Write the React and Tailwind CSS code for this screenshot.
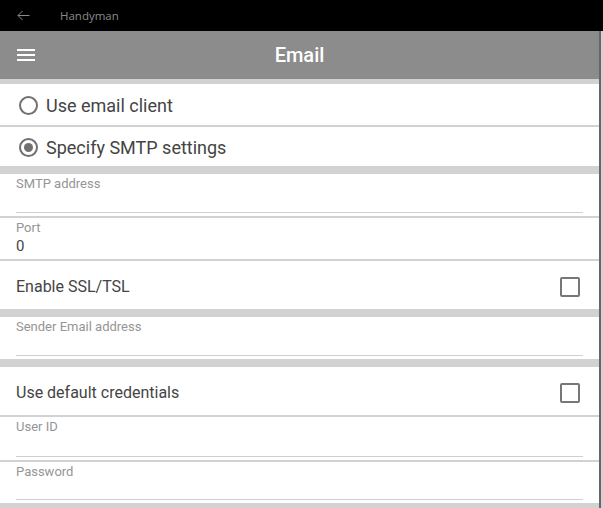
import React from 'react';

const Sep = () => <div className="h-[2px] bg-[#d2d2d2]"></div>;
const Stripe = ({ h }) => <div className={h}></div>;

const Radio = ({ checked, label, h }) => (
  <div className={`flex items-center pl-[19px] pt-[1px] ${h}`}>
    <span className="w-[19px] h-[19px] rounded-full border-2 border-[#707070] flex items-center justify-center">
      {checked && <span className="w-[9px] h-[9px] rounded-full bg-[#707070]"></span>}
    </span>
    <span className="ml-[8px] text-[18px] text-[#444]">{label}</span>
  </div>
);

const Field = ({ label, value, h }) => (
  <div className={`flex flex-col pl-4 pr-4 ${h}`}>
    <div className="mt-[2px] text-[13px] leading-[15px] text-[#959595]">{label}</div>
    <div className="flex-1 flex items-center text-[15px] text-[#444]">{value}</div>
    <div className="h-px bg-[#cfcfcf] mb-[3px]"></div>
  </div>
);

const Check = ({ label, h }) => (
  <div className={`flex items-center justify-between pl-4 pr-[19px] pt-[3px] ${h}`}>
    <span className="text-[16px] text-[#444]">{label}</span>
    <span className="w-[20px] h-[20px] border-2 border-[#777] rounded-[2px]"></span>
  </div>
);

export default function App() {
  return (
    <div className="w-[603px] h-[508px] overflow-hidden bg-white flex flex-col" style={{ fontFamily: 'Roboto, "Noto Sans", sans-serif' }}>
      <div className="h-[31px] bg-black flex items-center shrink-0">
        <svg className="ml-[17px]" width="13" height="11" viewBox="0 0 13 11" fill="none" stroke="#8a8a8a" strokeWidth="1">
          <path d="M12.5 5.5H1M5.5 1L1 5.5L5.5 10" />
        </svg>
        <span className="ml-[30px] text-[11.5px] text-[#8a8a8a]" style={{ fontFamily: '"Open Sans", sans-serif' }}>Handyman</span>
      </div>
      <div className="flex flex-1 min-h-0">
        <div className="w-[599px] flex flex-col bg-[#d2d2d2]">
          <div className="h-[48px] bg-[#8c8c8c] flex items-center relative shrink-0">
            <div className="ml-[17px] flex flex-col gap-[3px]">
              <span className="block w-[18px] h-[2px] bg-white"></span>
              <span className="block w-[18px] h-[2px] bg-white"></span>
              <span className="block w-[18px] h-[2px] bg-white"></span>
            </div>
            <span className="absolute left-0 right-0 text-center text-[20px] font-medium text-white">Email</span>
          </div>
          <Stripe h="h-[5px] shrink-0" />
          <div className="bg-white flex flex-col">
            <Radio label="Use email client" h="h-[41px]" />
            <Sep />
            <Radio checked label="Specify SMTP settings" h="h-[39px]" />
          </div>
          <Stripe h="h-[8px] shrink-0" />
          <div className="bg-white flex flex-col">
            <Field label="SMTP address" h="h-[42px]" />
            <Sep />
            <Field label="Port" value="0" h="h-[41px]" />
            <Sep />
            <Check label="Enable SSL/TSL" h="h-[48px]" />
          </div>
          <Stripe h="h-[8px] shrink-0" />
          <div className="bg-white">
            <Field label="Sender Email address" h="h-[42px]" />
          </div>
          <Stripe h="h-[8px] shrink-0" />
          <div className="bg-white flex flex-col">
            <Check label="Use default credentials" h="h-[48px]" />
            <Sep />
            <Field label="User ID" h="h-[43px]" />
            <Sep />
            <Field label="Password" h="h-[41px]" />
          </div>
        </div>
        <div className="w-[2px] bg-[#666]"></div>
        <div className="w-[2px] bg-[#d2d2d2]"></div>
      </div>
    </div>
  );
}
